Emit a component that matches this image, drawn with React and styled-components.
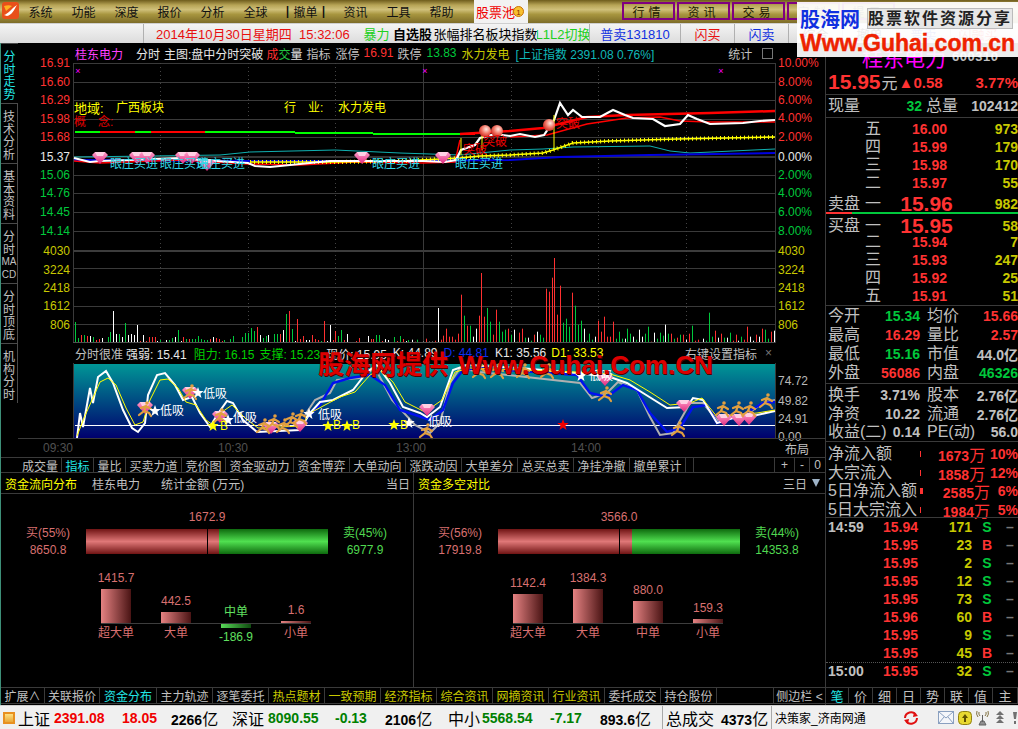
import React from "react";
import styled, { createGlobalStyle } from "styled-components";

const FONT = `"Liberation Sans", "Noto Sans CJK SC", sans-serif`;
const RED = "#ff3232";
const GREEN = "#00c83c";
const YELLOW = "#c8c800";
const GRAY = "#c0c0c0";
const LINE = "#3a3a3a";

const GlobalStyle = createGlobalStyle`
  html, body { margin: 0; padding: 0; background: #000; overflow: hidden; }
  body { font-family: ${FONT}; font-size: 12px; }
`;

const Page = styled.div`
  position: relative;
  width: 1018px;
  height: 729px;
  display: flex;
  flex-direction: column;
  background: #000;
  overflow: hidden;
`;

/* ---------- top menu ---------- */
const MenuBar = styled.div`
  height: 23px;
  flex: none;
  display: flex;
  align-items: stretch;
  background: linear-gradient(180deg, #6e5c1c 0, #b7a456 22%, #d0c07a 42%, #a8963f 62%, #7d6c28 100%);
  border-bottom: 1px solid #cfcfcf;
  overflow: hidden;
`;
const Logo = styled.svg`
  width: 17px;
  height: 17px;
  margin: 2px 0 0 2px;
  flex: none;
`;
const MenuItem = styled.div`
  width: ${(p) => p.$w || 43}px;
  flex: none;
  display: flex;
  align-items: center;
  justify-content: center;
  color: #111;
  font-size: 12px;
`;
const PoolTab = styled.div`
  width: 54px;
  margin-left: 11px;
  flex: none;
  display: flex;
  align-items: center;
  background: #f2f2f2;
  color: #f00000;
  font-size: 13px;
  padding-left: 2px;
  box-sizing: border-box;
  white-space: nowrap;
  overflow: hidden;
`;
const BadgeIcon = styled.svg`
  width: 11px;
  height: 11px;
  flex: none;
  margin-left: -2px;
`;
const MenuButtons = styled.div`
  margin-left: 94px;
  display: flex;
  gap: 2px;
  padding-top: 2px;
`;
const MenuButton = styled.div`
  width: 53px;
  height: 18px;
  box-sizing: border-box;
  flex: none;
  display: flex;
  align-items: center;
  justify-content: center;
  border: 2px solid #800080;
  color: #1a1a00;
  font-size: 12px;
  letter-spacing: 4px;
`;

/* ---------- toolbar ---------- */
const ToolBar = styled.div`
  height: 19px;
  flex: none;
  display: flex;
  align-items: center;
  padding-left: 2px;
  background: linear-gradient(180deg, #f4f4f4, #dcdcdc);
  font-size: 13px;
  white-space: nowrap;
`;
const ToolCell = styled.div`
  width: ${(p) => p.$w}px;
  height: 100%;
  flex: none;
  display: flex;
  align-items: center;
  justify-content: ${(p) => p.$align || "center"};
  padding-left: ${(p) => p.$pad || 0}px;
  box-sizing: border-box;
  color: ${(p) => p.$color || "#000"};
  font-weight: ${(p) => (p.$bold ? 700 : 400)};
  border-right: ${(p) => (p.$edge ? "1px solid #b0b0b0" : "none")};
  overflow: hidden;
`;

/* ---------- main ---------- */
const Main = styled.div`
  position: relative;
  flex: 1;
  display: flex;
  min-height: 0;
  border-left: 1px solid #3d8f78;
  box-sizing: border-box;
`;
const LeftColumn = styled.div`
  width: 824px;
  flex: none;
  display: flex;
  flex-direction: column;
`;
const ChartArea = styled.div`
  height: 414px;
  flex: none;
  display: flex;
`;
const SideTabs = styled.div`
  width: 17px;
  flex: none;
  display: flex;
  flex-direction: column;
`;
const SideTab = styled.div`
  height: 60px;
  box-sizing: border-box;
  padding-top: 7px;
  display: flex;
  flex-direction: column;
  align-items: center;
  border-top: 1px solid #4a4a4a;
  border-right: ${(p) => (p.$active ? "none" : "1px solid #4a4a4a")};
  color: ${(p) => (p.$active ? "#22e6e6" : GRAY)};
`;
const SideChar = styled.span`
  font-size: ${(p) => (p.$latin ? 10 : 12)}px;
  line-height: 12.5px;
`;
const ChartColumn = styled.div`
  width: 807px;
  flex: none;
  display: flex;
  flex-direction: column;
`;
const ChartHead = styled.div`
  height: 20px;
  flex: none;
  display: flex;
  align-items: center;
  padding-left: 57px;
  font-size: 12px;
  white-space: nowrap;
  color: ${GRAY};
`;
const HeadText = styled.span`
  margin-left: ${(p) => p.$gap || 0}px;
  color: ${(p) => p.$color || "inherit"};
  flex: none;
`;
const WindowIcon = styled.span`
  width: 9px;
  height: 9px;
  flex: none;
  margin-left: 10px;
  border: 1px solid #777;
`;
const Drawing = styled.svg`
  display: block;
  flex: none;
  overflow: visible;
`;
const ChartText = styled.text`
  font-family: ${FONT};
  font-size: ${(p) => p.$size || 12}px;
  fill: ${(p) => p.$color || GRAY};
  dominant-baseline: central;
  text-anchor: ${(p) => p.$anchor || "start"};
`;
const IndicatorHead = styled(ChartHead)`
  padding-right: 53px;
`;
const TimeAxis = styled.div`
  height: 19px;
  flex: none;
  display: flex;
  align-items: center;
  padding-left: 25px;
  box-sizing: border-box;
  border-top: 1px solid ${LINE};
  color: #505050;
  font-size: 12px;
`;
const TimeLabel = styled.span`
  width: 30px;
  flex: none;
  margin-right: ${(p) => p.$gap}px;
`;
const LayoutLabel = styled.span`
  margin-left: 184px;
  color: ${GRAY};
  font-size: 12px;
`;

/* tab strips */
const TabStrip = styled.div`
  height: ${(p) => p.$h || 16}px;
  flex: none;
  display: flex;
  align-items: stretch;
  border-top: 1px solid ${LINE};
  border-bottom: 1px solid ${LINE};
  box-sizing: border-box;
  white-space: nowrap;
`;
const TabGutter = styled.div`
  width: 18px;
  flex: none;
`;
const Tab = styled.div`
  width: ${(p) => p.$w}px;
  flex: none;
  box-sizing: border-box;
  display: flex;
  align-items: center;
  justify-content: center;
  border-right: ${(p) => (p.$plain ? "none" : `1px solid ${LINE}`)};
  border-left: ${(p) => (p.$lead ? `1px solid ${LINE}` : "none")};
  color: ${(p) => p.$color || GRAY};
  font-size: ${(p) => p.$size || 12}px;
`;

/* money flow panels */
const PanelHeads = styled.div`
  height: 21px;
  flex: none;
  display: flex;
  box-sizing: border-box;
  border-bottom: 1px solid ${LINE};
`;
const PanelHead = styled.div`
  width: ${(p) => p.$w}px;
  flex: none;
  box-sizing: border-box;
  display: flex;
  align-items: center;
  padding: 0 ${(p) => p.$right || 3}px 0 4px;
  color: ${GRAY};
  font-size: 12px;
  white-space: nowrap;
  border-right: ${(p) => (p.$edge ? `1px solid ${LINE}` : "none")};
`;
const Fill = styled.span`
  flex: 1;
`;
const Caret = styled.span`
  margin-left: 5px;
  width: 0;
  height: 0;
  border-left: 4px solid transparent;
  border-right: 4px solid transparent;
  border-top: 8px solid #9fb4c8;
`;
const FundRow = styled.div`
  height: 193px;
  flex: none;
  display: flex;
`;
const FundPanel = styled.div`
  width: ${(p) => p.$w}px;
  flex: none;
  box-sizing: border-box;
  padding: 16px 0 0 ${(p) => p.$left}px;
  border-right: ${(p) => (p.$edge ? `1px solid ${LINE}` : "none")};
`;
const Summary = styled.div`
  display: grid;
  grid-template-columns: 76px 242px 74px;
  grid-template-rows: 14px 25px;
  row-gap: 5px;
  align-items: center;
  font-size: 12px;
  line-height: 17px;
  text-align: center;
`;
const Diff = styled.div`
  grid-column: 2;
  color: #d87070;
`;
const SideLabel = styled.div`
  grid-row: 2;
  color: ${(p) => p.$color};
`;
const MoneyBar = styled.div`
  grid-row: 2;
  grid-column: 2;
  height: 25px;
  display: flex;
`;
const MoneyPart = styled.div`
  position: relative;
  flex: ${(p) => (p.$grow ? 1 : "none")};
  background: linear-gradient(180deg, ${(p) => p.$edge} 0, ${(p) => p.$mid} 50%, ${(p) => p.$edge} 100%);
`;
const MoneyTick = styled.span`
  position: absolute;
  top: 0;
  bottom: 0;
  width: 1px;
  background: #000;
`;
const OrderGrid = styled.div`
  margin: 0 0 0 ${(p) => p.$left}px;
  width: 210px;
  display: grid;
  grid-template-columns: repeat(4, 30px);
  grid-template-rows: 69px 1px auto;
  column-gap: 30px;
  justify-content: start;
  font-size: 12px;
  line-height: 16px;
`;
const UpperCell = styled.div`
  display: flex;
  flex-direction: column;
  align-items: center;
  justify-content: flex-end;
  white-space: nowrap;
  color: ${(p) => p.$color || "#d87070"};
`;
const OrderBar = styled.div`
  width: 30px;
  margin-top: 3px;
  background: linear-gradient(90deg, #e58282, #4a1414);
`;
const BaseLine = styled.div`
  grid-column: 1 / -1;
  background: #3d3d3d;
`;
const LowerCell = styled.div`
  display: flex;
  flex-direction: column;
  align-items: center;
  white-space: nowrap;
  padding-top: ${(p) => (p.$neg ? 0 : 1)}px;
  color: ${(p) => p.$color || "#d87070"};
`;
const NegBar = styled.div`
  width: 30px;
  height: 4px;
  margin-bottom: 1px;
  background: linear-gradient(90deg, #58d858, #0e4a0e);
`;

/* ---------- right panel ---------- */
const RightPanel = styled.div`
  width: 193px;
  flex: none;
  box-sizing: border-box;
  border-left: 1px solid ${LINE};
  display: flex;
  flex-direction: column;
  overflow: hidden;
  white-space: nowrap;
`;
const NameRow = styled.div`
  height: 27px;
  flex: none;
  display: flex;
  align-items: center;
  padding-left: 36px;
`;
const StockName = styled.span`
  color: #ff00ff;
  font-size: 21px;
`;
const StockCode = styled.span`
  color: ${GRAY};
  font-size: 13px;
  font-weight: 700;
  margin-left: 6px;
  letter-spacing: 0.5px;
`;
const PriceRow = styled.div`
  height: 25px;
  flex: none;
  box-sizing: border-box;
  display: flex;
  align-items: center;
  padding: 0 0 0 2px;
  border-bottom: 1px solid ${LINE};
  color: ${RED};
  font-weight: 700;
  font-size: 15px;
`;
const BigPrice = styled.span`
  font-size: 21px;
`;
const Unit = styled.span`
  color: ${GRAY};
  font-size: 16px;
  font-weight: 400;
  margin: 0 1px 0 1px;
`;
const Row = styled.div`
  height: ${(p) => p.$h || 18}px;
  flex: none;
  box-sizing: border-box;
  display: grid;
  grid-template-columns: ${(p) => p.$cols};
  align-items: center;
  padding-left: 2px;
  border-bottom: ${(p) => (p.$rule ? `1px solid ${LINE}` : "none")};
`;
const Label = styled.span`
  color: ${GRAY};
  font-size: 16px;
  line-height: 16px;
  margin-left: ${(p) => p.$pad || 0}px;
  text-align: ${(p) => p.$align || "left"};
`;
const Value = styled.span`
  color: ${(p) => p.$color || GRAY};
  font-size: ${(p) => p.$size || 14}px;
  font-weight: 700;
  text-align: ${(p) => p.$align || "right"};
`;
const Pressure = styled.div`
  height: 2px;
  flex: none;
  display: flex;
  background: ${GREEN};
`;
const PressureRed = styled.div`
  width: 26px;
  background: ${RED};
`;
const Rule = styled.div`
  height: 1px;
  flex: none;
  background: ${LINE};
`;
const Spacer = styled.div`
  height: ${(p) => p.$h}px;
  flex: none;
`;
const Tick = styled.span`
  width: ${(p) => p.$w}px;
  height: 6px;
  background: ${RED};
  justify-self: start;
`;
const DottedRule = styled.div`
  height: 0;
  flex: none;
  border-top: 1px dotted #555;
  margin-bottom: -1px;
`;
const BigCn = styled.span`
  font-size: 16px;
  font-weight: 400;
`;

/* ---------- status bar ---------- */
const StatusBar = styled.div`
  height: 24px;
  flex: none;
  display: flex;
  align-items: center;
  background: #f0f0f0;
  border-top: 1px solid #cfcfcf;
  box-sizing: border-box;
  white-space: nowrap;
  overflow: hidden;
`;
const OrangeSquare = styled.span`
  width: 12px;
  height: 12px;
  margin: 0 3px;
  flex: none;
  box-sizing: border-box;
  border: 2px solid #e89020;
  background: linear-gradient(180deg, #ffe080, #e8a838);
`;
const StatusCell = styled.span`
  width: ${(p) => p.$w}px;
  flex: none;
  color: ${(p) => p.$color || "#000"};
  font-size: ${(p) => (p.$small ? 12 : p.$cn ? 16 : 14)}px;
  font-weight: ${(p) => (p.$cn ? 400 : 700)};
`;
const StatusRule = styled.span`
  width: 1px;
  height: 100%;
  background: #a8a8a8;
  flex: none;
  margin-right: 3px;
`;
const StatusIcon = styled.svg`
  flex: none;
  margin-left: ${(p) => p.$gap}px;
`;

/* ---------- overlays ---------- */
const AdBox = styled.div`
  position: absolute;
  left: 797px;
  top: 2px;
  width: 221px;
  height: 55px;
  box-sizing: border-box;
  padding: 3px 0 0 3px;
  background: rgba(255, 255, 255, 0.93);
  white-space: nowrap;
`;
const AdTop = styled.div`
  display: flex;
  align-items: center;
  height: 26px;
`;
const AdName = styled.span`
  color: #1030e0;
  font-size: 20px;
  font-weight: 700;
`;
const AdSlogan = styled.span`
  margin-left: 7px;
  width: 146px;
  background: #e6e6e6;
  border: 1px solid #bbb;
  box-sizing: border-box;
  text-align: center;
  color: #222;
  font-size: 16px;
  font-weight: 700;
  letter-spacing: 2px;
  line-height: 19px;
`;
const AdUrl = styled.div`
  color: #ee2200;
  font-size: 23px;
  font-weight: 700;
  line-height: 24px;
  -webkit-text-stroke: 0.4px #ee2200;
`;
const Banner = styled.div`
  position: absolute;
  left: 317px;
  top: 308px;
  color: #dd0000;
  font-size: 26px;
  font-weight: 700;
  line-height: 28px;
  white-space: nowrap;
  text-shadow: 1px 1px 0 #500000;
`;
const BannerUrl = styled.span`
  margin-left: 10px;
`;

/* ---------- chart data ---------- */
const line = (pts) => pts.map((p) => p.join(",")).join(" ");

const WHITE_LINE = [[74,158],[90,162],[100,161],[130,160],[180,158],[200,160],[248,163],[255,166],[270,167],[290,165],[310,163],[330,161],[355,161],[400,161],[423,161],[445,162],[456,160],[461,150],[475,145],[480,138],[495,134],[510,136],[520,134],[535,137],[544,135],[554,120],[560,103],[568,115],[573,110],[582,117],[600,117],[613,110],[625,115],[633,118],[653,119],[665,126],[680,124],[688,115],[697,119],[710,124],[743,123],[760,121],[775,120]];
const RED_TOP = [[460,134],[510,131],[543,128],[587,117],[627,115],[710,113],[775,111]];
const RED_LOW = [[510,137],[547,135],[587,124],[627,118],[660,117],[680,121],[710,122],[775,122]];
const RED_LEFT = [[74,161],[100,163],[180,160],[248,164],[300,165],[355,162],[423,163],[455,162],[460,140]];
const YELLOW_LINE = [[250,162],[335,162],[400,161],[460,158],[480,156],[510,155],[543,153],[553,150],[573,143],[610,141],[677,139],[775,137]];
const CYAN_LINE = [[74,157],[150,156],[220,155],[250,152],[335,150],[400,153],[460,155],[510,150],[543,149],[573,147],[650,146],[670,151],[690,153],[775,149]];
const BLUE_LINE = [[74,160],[250,161],[400,161],[510,160],[543,158],[560,157],[650,155],[775,153]];
const TREND = [[75,100,132,"#00ff00"],[100,135,132,"#ff0000"],[135,151,132,"#00ff00"],[151,205,132,"#ff0000"],[205,295,132,"#00ff00"],[295,373,133,"#00ff00"],[373,460,134,"#00ff00"],[460,475,134,"#ff0000"]];

const PRICE_AXIS = [["16.91",63,RED],["16.60",82,RED],["16.29",100,RED],["15.98",119,RED],["15.68",137,RED],["15.37",157,"#e8e8e8"],["15.06",175,GREEN],["14.76",193,GREEN],["14.45",212,GREEN],["14.14",231,GREEN],["4030",251,YELLOW],["3224",270,YELLOW],["2418",288,YELLOW],["1612",306,YELLOW],["806",325,YELLOW]];
const PERCENT_AXIS = [["10.00%",63,RED],["8.00%",82,RED],["6.00%",100,RED],["4.00%",118,RED],["2.00%",137,RED],["0.00%",157,"#e8e8e8"],["2.00%",175,GREEN],["4.00%",193,GREEN],["6.00%",212,GREEN],["8.00%",231,GREEN],["4030",251,YELLOW],["3224",270,YELLOW],["2418",288,YELLOW],["1612",306,YELLOW],["806",325,YELLOW]];
const GRID_Y = [63,82,100,119,137,175,193,212,231,268,287,306,324];

// x in 1/3 px, colour, height in px
const VOL_LEFT = "225g21 235g5 244r8 253g8 262r7 271w7 280g6 289r3 298r4 307w5 316w1 325g6 331g11 340w32 349w9 358g9 367w6 376g20 385w8 394w9 403w8 412w18 421r2 430w8 439r2 448r6 457r6 466r6 472w2 481g3 499w3 508g3 517g5 526w6 535g13 544w2 550r6 559g4 568r4 577g4 586g4 595g7 604g4 613g3 622g3 631r4 640w6 649r5 658r4 667r2 673g3 691g4 700g7 709w1 727g6 736g10 745g10 754g15 763g12 772r16 781w8 790g5 799g7 805w8 814w1 823g9 832g9 841r9 850w13 859g29 868r32 877g14 886w2 892r24 901r4 910r7 919w3 928w3 937r8 946r4 955r3 964g2 973r22 982w2 991w18 1000r3 1006r12 1015g7 1024g13 1033r3 1042w9 1051w1 1060w1 1069r2 1078r5 1087r1 1096g1 1105w7 1114r4 1120r4 1129g8 1138g8 1147r2 1156w4 1165w3 1174r1 1183g6 1192r2 1201g7 1210r4 1219w2 1225g3";
// x in 1/3 px past 410, colour, top in 1/3 px past 250
const VOL_RIGHT = "5w270 14r276 22g270 40w276 49r267 58w276 67w276 76r273 85w175 94r270 100r258 109r237 118r261 127r261 136r270 145r252 154r135 163g198 172r228 181g228 190w261 199w237 206r198 214r70 223r201 232g175 241g216 250r255 259r180 268g216 277g246 286g240 295r237 304g255 313w240 320g276 328r249 337r237 346g264 355w264 364g273 373r255 382w246 391g255 400g264 409r117 418r126 427r84 433r25 442r195 451r108 460g219 469g207 478g231 487r129 496g168 505g225 514g213 523w237 532g273 538g252 547g270 556w261 565r213 574r246 583r201 592r261 601r261 610r216 619g267 628g246 637g267 646w267 652g237 661g252 670w261 679g270 688w240 697w261 706g252 715g231 724r276 733w249 742g267 751g249 760g258 766w225 775g252 784r252 793g267 802r264 811g255 820r255 829w270 838r252 847g228 856r273 865r270 880w267 889g273 898g189 907g261 916r243 925w264 934r252 943g264 952w264 961g249 970r273 979r255 985w273 994g261 1003r270 1012r231 1021w261 1030w273 1039r255 1048w261 1057r237 1066g240 1075g267 1084r246 1093w243";
const VOL_COLORS = { r: "#ff3030", g: "#00c83c", w: "#ffffff" };

const volumeBars = [
  ...VOL_LEFT.split(" ").map((s) => {
    const [, x, c, h] = s.match(/(\d+)([rgw])(\d+)/);
    return { x: +x / 3, c, h: +h };
  }),
  ...VOL_RIGHT.split(" ").map((s) => {
    const [, x, c, t] = s.match(/(\d+)([rgw])(\d+)/);
    return { x: 410 + +x / 3, c, h: (280 - +t) / 3 };
  }),
];

const IND_WHITE = [[77,438],[80,413],[83,427],[90,388],[93,403],[98,377],[106,371],[113,383],[123,410],[132,428],[138,432],[145,423],[148,395],[157,375],[165,373],[175,385],[183,400],[192,397],[200,413],[210,427],[217,415],[227,401],[233,403],[243,420],[257,432],[300,430],[310,413],[320,402],[333,400],[353,390],[367,372],[377,365],[390,383],[403,407],[420,413],[427,417],[440,407],[453,370],[467,365],[520,368],[577,373],[610,377],[627,383],[643,393],[667,408],[687,407],[693,398],[703,400],[717,423],[733,418],[757,415],[775,411]];
const IND_YELLOW = [[77,436],[84,418],[92,400],[100,382],[108,378],[116,385],[126,408],[135,425],[143,422],[150,400],[160,380],[168,379],[178,388],[186,402],[196,405],[206,420],[213,425],[222,412],[232,405],[245,418],[258,428],[300,426],[312,412],[325,405],[340,397],[355,392],[370,375],[380,370],[393,382],[405,402],[425,412],[442,400],[455,372],[470,368],[520,370],[575,372],[610,374],[630,380],[650,392],[670,405],[690,403],[702,398],[718,418],[735,415],[757,413],[775,410]];
const IND_BLUE = [[307,418],[320,405],[333,383],[350,378],[370,375],[385,385],[400,410],[430,420],[443,410],[453,383],[463,370],[477,368],[577,375],[590,393],[607,397],[623,385],[637,390],[650,413],[667,432],[680,428],[693,407],[707,405],[717,423],[743,415],[763,403],[775,402]];
const IND_GRAY = [[305,415],[315,400],[330,393],[337,380],[360,378],[375,368],[392,400],[415,425],[430,433],[440,423],[450,383],[460,368],[480,372],[580,383],[592,398],[607,393],[618,382],[637,390],[650,417],[660,435],[673,433],[690,403],[703,403],[717,420],[743,417],[763,403],[775,400]];

const starPts = (cx, cy, r) => {
  const out = [];
  for (let i = 0; i < 10; i++) {
    const a = -Math.PI / 2 + (i * Math.PI) / 5;
    const rad = i % 2 ? r * 0.42 : r;
    out.push(`${(cx + rad * Math.cos(a)).toFixed(1)},${(cy + rad * Math.sin(a)).toFixed(1)}`);
  }
  return out.join(" ");
};

function Gem({ x, y }) {
  return (
    <g transform={`translate(${x} ${y})`}>
      <polygon points="-8,-3 -5,-6 5,-6 8,-3 0,6" fill="url(#gemFill)" />
      <polygon points="-5,-6 5,-6 3,-2 -3,-2" fill="#ffd0e4" />
    </g>
  );
}

function Runner({ x, y }) {
  return (
    <g transform={`translate(${x} ${y})`} stroke="#e2a040" strokeWidth="2.2" fill="none" strokeLinecap="round">
      <circle cx="2" cy="-7" r="1.8" fill="#e2a040" stroke="none" />
      <path d="M1 -4 L-1 1 L-6 5 M-1 1 L4 3 L6 6 M1 -4 L6 -1 M1 -4 L-4 -2" />
    </g>
  );
}

function Ball({ x, y }) {
  return <circle cx={x} cy={y} r="6" fill="url(#ballFill)" />;
}

function PriceChart() {
  return (
    <Drawing width="807" height="280" viewBox="18 63 807 280">
      <defs>
        <linearGradient id="gemFill" x1="0" y1="0" x2="0" y2="1">
          <stop offset="0" stopColor="#ff9cc8" />
          <stop offset="1" stopColor="#e02a80" />
        </linearGradient>
        <radialGradient id="ballFill" cx="0.6" cy="0.35" r="0.75">
          <stop offset="0" stopColor="#ffe8e0" />
          <stop offset="0.5" stopColor="#f07060" />
          <stop offset="1" stopColor="#c01810" />
        </radialGradient>
      </defs>
      {GRID_Y.map((y) => (
        <line key={y} x1="73" x2="775" y1={y + 0.5} y2={y + 0.5} stroke={LINE} />
      ))}
      <line x1="73" x2="775" y1="157" y2="157" stroke="#333" strokeWidth="2" />
      <line x1="73" x2="775" y1="251" y2="251" stroke="#3c3c3c" strokeWidth="2" />
      {[160, 248, 335, 511, 598, 686].map((x) => (
        <line key={x} x1={x + 0.5} x2={x + 0.5} y1="63" y2="343" stroke="#444" strokeDasharray="1 3" />
      ))}
      {[73, 423, 775].map((x) => (
        <line key={x} x1={x + 0.5} x2={x + 0.5} y1="63" y2="343" stroke={LINE} />
      ))}
      {PRICE_AXIS.map(([t, y, c]) => (
        <ChartText key={t} x="70" y={y} $anchor="end" $color={c}>{t}</ChartText>
      ))}
      {PERCENT_AXIS.map(([t, y, c], i) => (
        <ChartText key={i} x="778" y={y} $color={c}>{t}</ChartText>
      ))}

      {[78, 425, 721].map((x) => (
        <ChartText key={x} x={x} y="71" $size={9} $anchor="middle" $color="#ff00ff">×</ChartText>
      ))}
      <ChartText x="74" y="108" $size={13} $color="#ffff00">地域:</ChartText>
      <ChartText x="116" y="108" $size={12} $color="#ffff00">广西板块</ChartText>
      <ChartText x="284" y="108" $size={12} $color="#ffff00">行</ChartText>
      <ChartText x="308" y="108" $size={12} $color="#ffff00">业:</ChartText>
      <ChartText x="338" y="108" $size={12} $color="#ffff00">水力发电</ChartText>
      <ChartText x="74" y="122" $size={12} $color="#e00000">概</ChartText>
      <ChartText x="98" y="122" $size={12} $color="#e00000">念:</ChartText>

      {TREND.map(([a, b, y, c]) => (
        <line key={a} x1={a} x2={b} y1={y} y2={y} stroke={c} strokeWidth="2" />
      ))}
      <polyline points={line(CYAN_LINE)} fill="none" stroke="#10b0b0" />
      <polyline points={line(BLUE_LINE)} fill="none" stroke="#0000e0" strokeWidth="2" />
      <polyline points={line(RED_LEFT)} fill="none" stroke="#ff0000" strokeWidth="1.5" />
      <polyline points={line(YELLOW_LINE)} fill="none" stroke="#ffff00" strokeWidth="1.5" />
      <polyline points={line(YELLOW_LINE)} fill="none" stroke="#ffff00" strokeWidth="4" strokeDasharray="1 3" />
      <polyline points={line(RED_LOW)} fill="none" stroke="#ff0000" strokeWidth="1.5" />
      <polyline points={line(RED_TOP)} fill="none" stroke="#ff0000" strokeWidth="2.5" />
      <polyline points={line(WHITE_LINE)} fill="none" stroke="#ffffff" strokeWidth="2.2" />
      {[[461,138,155],[482,130,150],[554,115,150]].map(([x, a, b]) => (
        <line key={x} x1={x} x2={x} y1={a} y2={b} stroke="#ffff00" />
      ))}

      {[100,137,147,183,192,207,362,443].map((x, i) => (
        <Gem key={x} x={x} y={i === 5 ? 165 : 158} />
      ))}
      {[110,160,197,372,455].map((x) => (
        <ChartText key={x} x={x} y="164" $size={12} $color="#30d8e8">眼庄买进</ChartText>
      ))}
      <Ball x={485} y={131} />
      <Ball x={497} y={131} />
      <Ball x={549} y={125} />
      <ChartText x="463" y="150" $color="#f00000">突破</ChartText>
      <ChartText x="483" y="142" $color="#f00000">突破</ChartText>
      <ChartText x="556" y="124" $color="#f00000">突破</ChartText>

      {volumeBars.map((b, i) => (
        <rect key={i} x={Math.round(b.x)} y={343 - b.h} width="1" height={b.h} fill={VOL_COLORS[b.c]} />
      ))}
      <line x1="73" x2="775" y1="342.5" y2="342.5" stroke="#505050" />
    </Drawing>
  );
}

function IndicatorChart() {
  return (
    <Drawing width="807" height="75" viewBox="18 363 807 75">
      <defs>
        <linearGradient id="indFill" x1="0" y1="0" x2="0" y2="1">
          <stop offset="0" stopColor="#009696" />
          <stop offset="1" stopColor="#00006e" />
        </linearGradient>
      </defs>
      <rect x="74" y="364" width="701" height="74" fill="url(#indFill)" />
      <line x1="73.5" x2="73.5" y1="363" y2="438" stroke={LINE} />
      <line x1="775.5" x2="775.5" y1="363" y2="438" stroke={LINE} />
      <line x1="75" x2="775" y1="425.5" y2="425.5" stroke="#fff" />
      <polyline points={line(IND_GRAY)} fill="none" stroke="#b0b0b0" strokeWidth="2" />
      <polyline points={line(IND_BLUE)} fill="none" stroke="#0010f0" strokeWidth="2.4" />
      <polyline points={line(IND_WHITE)} fill="none" stroke="#fff" strokeWidth="2" />
      <polyline points={line(IND_YELLOW)} fill="none" stroke="#ffff00" />

      {[[145,408],[190,393],[220,417],[427,410],[605,380],[684,406],[724,420],[739,420],[749,419],[271,428],[300,426]].map(([x, y]) => (
        <Gem key={x} x={x} y={y} />
      ))}
      {[[145,410],[190,393],[220,417],[263,427],[273,423],[283,427],[291,421],[300,418],[426,432],[479,372],[497,372],[523,372],[547,372],[605,395],[678,430],[722,410],[737,410],[749,410],[766,402]].map(([x, y]) => (
        <Runner key={x} x={x} y={y} />
      ))}
      {[[155,411],[198,393],[228,420],[309,414],[409,423],[581,376]].map(([x, y]) => (
        <polygon key={x} points={starPts(x, y, 6)} fill="#fff" />
      ))}
      {[[213,426],[328,426],[347,426],[394,425]].map(([x, y]) => (
        <polygon key={x} points={starPts(x, y, 6)} fill="#ffff00" />
      ))}
      <polygon points={starPts(563, 425, 6)} fill="#f00000" />
      {[[160,411],[203,394],[233,418],[318,415],[428,422],[589,376]].map(([x, y]) => (
        <ChartText key={x} x={x} y={y} $color="#fff">低吸</ChartText>
      ))}
      {[[220,426],[333,425],[352,425],[400,425]].map(([x, y]) => (
        <ChartText key={x} x={x} y={y} $color="#ffff00">B</ChartText>
      ))}
      {[["74.72",381],["49.82",401],["24.91",419],["0.00",437]].map(([t, y]) => (
        <ChartText key={t} x="778" y={y} $color="#b8b8b8">{t}</ChartText>
      ))}
    </Drawing>
  );
}

/* ---------- tab data ---------- */
const SIDE_TABS = [
  ["分","时","走","势"],["技","术","分","析"],["基","本","资","料"],["分","时","MA","CD"],["分","时","顶","底"],["机","构","分","时"],
];
const SERIES_TABS = [
  ["成交量",43],["指标",32,"#22e6e6"],["量比",32],["买卖力道",56],["竞价图",44],["资金驱动力",68],["资金博弈",56],["大单动向",56],["涨跌动因",56],["大单差分",56],["总买总卖",56],["净挂净撤",56],["撤单累计",56],["",8],
];
const BOTTOM_TABS = [
  ["扩展∧",44],["关联报价",55],["资金分布",57,"#22e6e6"],["主力轨迹",56],["逐笔委托",56],["热点题材",56,YELLOW],["一致预期",56,YELLOW],["经济指标",56,YELLOW],["综合资讯",56,YELLOW],["网摘资讯",56,YELLOW],["行业资讯",56,YELLOW],["委托成交",56],["持仓股份",56],
];
const QUOTE_TABS = [["笔",23,"#22e6e6"],["价",24],["细",24],["日",24],["势",24],["联",24],["值",24],["主",25]];

const FLOW_A = {
  buy: "买(55%)", buyVal: "8650.8", sell: "卖(45%)", sellVal: "6977.9", diff: "1672.9",
  redW: 133, tick: 121,
  items: [["1415.7","超大单",34],["442.5","大单",11],["中单","-186.9",0],["1.6","小单",2]],
};
const FLOW_B = {
  buy: "买(56%)", buyVal: "17919.8", sell: "卖(44%)", sellVal: "14353.8", diff: "3566.0",
  redW: 134, tick: 121,
  items: [["1142.4","超大单",29],["1384.3","大单",34],["880.0","中单",22],["159.3","小单",4]],
};

function FlowChart({ data, w, left, barLeft, edge }) {
  return (
    <FundPanel $w={w} $left={left} $edge={edge}>
      <Summary>
        <Diff>{data.diff}</Diff>
        <SideLabel $color="#d87070">{data.buy}<br />{data.buyVal}</SideLabel>
        <MoneyBar>
          <MoneyPart $edge="#701414" $mid="#e07878" style={{ width: data.redW }}>
            <MoneyTick style={{ left: data.tick }} />
          </MoneyPart>
          <MoneyPart $edge="#0e6a0e" $mid="#50e050" $grow />
        </MoneyBar>
        <SideLabel $color="#50d850">{data.sell}<br />{data.sellVal}</SideLabel>
      </Summary>
      <OrderGrid $left={barLeft}>
        {data.items.map(([top, , h]) => (
          <UpperCell key={top} $color={h === 0 ? "#60e060" : undefined}>
            <span>{top}</span>
            {h > 0 ? <OrderBar style={{ height: h }} /> : <Spacer $h={3} />}
          </UpperCell>
        ))}
        <BaseLine />
        {data.items.map(([, bottom, h]) => (
          <LowerCell key={bottom} $neg={h === 0} $color={h === 0 ? "#60e060" : undefined}>
            {h === 0 && <NegBar />}
            {bottom}
          </LowerCell>
        ))}
      </OrderGrid>
    </FundPanel>
  );
}

/* ---------- right panel data ---------- */
const ASK = [["五","16.00","973"],["四","15.99","179"],["三","15.98","170"],["二","15.97","55"]];
const BID = [["二","15.94","7"],["三","15.93","247"],["四","15.92","25"],["五","15.91","51"]];
const ORDER_COLS = "32px 26px 61px 1fr";
const BIG_ORDER_COLS = "32px 26px 81px 1fr";
const STAT_COLS = "32px 60px 7px 32px 1fr";
const TICK_COLS = "55px 50px 39px 30px 1fr";

const STATS_A = [
  ["今开","15.34",GREEN,"均价","15.66",RED],
  ["最高","16.29",RED,"量比","2.57",RED],
  ["最低","15.16",GREEN,"市值","44.0亿",GRAY],
  ["外盘","56086",RED,"内盘","46326",GREEN],
];
const STATS_B = [
  ["换手","3.71%",GRAY,"股本","2.76亿",GRAY],
  ["净资","10.22",GRAY,"流通","2.76亿",GRAY],
  ["收益(二)","0.14",GRAY,"PE(动)","56.0",GRAY],
];
const FLOWS = [
  ["净流入额",1,"1673","10%","92px 18px 47px 1fr"],
  ["大宗流入",1,"1858","12%","92px 18px 47px 1fr"],
  ["5日净流入额",3,"2585","6%","92px 18px 52px 1fr"],
  ["5日大宗流入",1,"1984","5%","92px 18px 52px 1fr"],
];
const TICKS = [
  ["14:59","15.94","171","S"],["","15.95","23","B"],["","15.95","2","S"],["","15.95","12","S"],["","15.95","73","S"],
  ["","15.96","60","B"],["","15.95","9","S"],["","15.95","45","B"],
];

function OrderRow({ label, level, price, qty, big, h }) {
  return (
    <Row $cols={big ? BIG_ORDER_COLS : ORDER_COLS} $h={h}>
      <Label>{label}</Label>
      <Label $align="center">{level}</Label>
      <Value $color={RED} $size={big ? 21 : 14} $align={big ? "center" : "right"}>{price}</Value>
      <Value $color={YELLOW}>{qty}</Value>
    </Row>
  );
}

function StatRow({ row, h }) {
  const [a, av, ac, b, bv, bc] = row;
  return (
    <Row $cols={STAT_COLS} $h={h}>
      <Label>{a}</Label>
      <Value $color={ac}>{av}</Value>
      <span />
      <Label>{b}</Label>
      <Value $color={bc}>{bv}</Value>
    </Row>
  );
}

function TickRow({ t }) {
  const [time, price, vol, side] = t;
  return (
    <Row $cols={TICK_COLS} $h={18}>
      <Value $align="left" $color={GRAY}>{time}</Value>
      <Value $align="left" $color={RED}>{price}</Value>
      <Value $color={YELLOW}>{vol}</Value>
      <Value $align="center" $color={side === "S" ? GREEN : RED}>{side}</Value>
      <Value $align="center" $color="#777">–</Value>
    </Row>
  );
}

export default function App() {
  return (
    <Page>
      <GlobalStyle />
      <MenuBar>
        <Logo viewBox="0 0 17 17">
          <rect width="17" height="17" rx="3" fill="#e8501a" />
          <path d="M2 13 C6 12 9 7 15 3 C12 8 10 13 5 14 Z" fill="#fff" />
          <path d="M2 4 C5 3 8 3 10 4 L4 9 Z" fill="#ffb020" />
        </Logo>
        {["系统","功能","深度","报价","分析","全球"].map((m) => <MenuItem key={m}>{m}</MenuItem>)}
        <MenuItem $w={57}>┃撤单┃</MenuItem>
        {["资讯","工具","帮助"].map((m) => <MenuItem key={m}>{m}</MenuItem>)}
        <PoolTab>
          股票池
          <BadgeIcon viewBox="0 0 11 11">
            <circle cx="5.5" cy="5.5" r="5" fill="#f8c030" stroke="#c87000" />
            <text x="5.5" y="8.5" fontSize="8" textAnchor="middle" fill="#803000" fontFamily="Liberation Sans">1</text>
          </BadgeIcon>
        </PoolTab>
        <MenuButtons>
          {["行情","资讯","交易","定制","提示"].map((b) => <MenuButton key={b}>{b}</MenuButton>)}
        </MenuButtons>
      </MenuBar>

      <ToolBar>
        <ToolCell $w={142} $edge />
        <ToolCell $w={217} $align="flex-start" $pad={12} $color="#e81010">2014年10月30日星期四&nbsp;&nbsp;15:32:06</ToolCell>
        <ToolCell $w={31} $color="#20d020">暴力</ToolCell>
        <ToolCell $w={41} $bold>自选股</ToolCell>
        <ToolCell $w={53}>张幅排名</ToolCell>
        <ToolCell $w={51}>板块指数</ToolCell>
        <ToolCell $w={53} $color="#20d020" $edge>L1L2切换</ToolCell>
        <ToolCell $w={91} $color="#1030e0" $edge>普卖131810</ToolCell>
        <ToolCell $w={54} $color="#e81010" $edge>闪买</ToolCell>
        <ToolCell $w={54} $color="#1030e0" $edge>闪卖</ToolCell>
        <ToolCell $w={54} $edge>综合</ToolCell>
        <ToolCell $w={54} $edge>撤单</ToolCell>
        <ToolCell $w={54} $color="#1030e0" $edge>普卖</ToolCell>
        <ToolCell $w={54} $color="#e81010">闪融买</ToolCell>
      </ToolBar>

      <Main>
        <LeftColumn>
          <ChartArea>
            <SideTabs>
              {SIDE_TABS.map((chars, i) => (
                <SideTab key={i} $active={i === 0}>
                  {chars.map((c) => <SideChar key={c} $latin={c.length > 1}>{c}</SideChar>)}
                </SideTab>
              ))}
            </SideTabs>
            <ChartColumn>
              <ChartHead>
                <HeadText $color="#ff40ff">桂东电力</HeadText>
                <HeadText $gap={13} $color="#e8e8e8">分时</HeadText>
                <HeadText $gap={4} $color="#e8e8e8">主图:盘中分时突破</HeadText>
                <HeadText $gap={3} $color="#ff3030">成</HeadText>
                <HeadText $color="#20c040">交</HeadText>
                <HeadText $color="#e8e8e8">量</HeadText>
                <HeadText $gap={4}>指标</HeadText>
                <HeadText $gap={5}>涨停</HeadText>
                <HeadText $gap={4} $color={RED}>16.91</HeadText>
                <HeadText $gap={4}>跌停</HeadText>
                <HeadText $gap={5} $color={GREEN}>13.83</HeadText>
                <HeadText $gap={5} $color={YELLOW}>水力发电</HeadText>
                <HeadText $gap={6} $color="#10b8b8">[上证指数 2391.08 0.76%]</HeadText>
                <HeadText $gap={74}>统计</HeadText>
                <WindowIcon />
              </ChartHead>
              <PriceChart />
              <IndicatorHead>
                <HeadText>分时很准</HeadText>
                <HeadText $gap={3} $color="#e8e8e8">强弱: 15.41</HeadText>
                <HeadText $gap={7} $color="#00d000">阻力: 16.15</HeadText>
                <HeadText $gap={5} $color="#00d000">支撑: 15.23</HeadText>
                <HeadText $gap={6} $color="#e8e8e8">现价: 15.95</HeadText>
                <HeadText $gap={6} $color="#e8e8e8">K: 44.89</HeadText>
                <HeadText $gap={6} $color="#1030f0">D: 44.81</HeadText>
                <HeadText $gap={6} $color="#e8e8e8">K1: 35.56</HeadText>
                <HeadText $gap={5} $color="#ffff00">D1: 33.53</HeadText>
                <Fill />
                <HeadText>右键设置指标</HeadText>
                <HeadText $gap={8} $color="#777">×</HeadText>
              </IndicatorHead>
              <IndicatorChart />
              <TimeAxis>
                <TimeLabel $gap={145}>09:30</TimeLabel>
                <TimeLabel $gap={148}>10:30</TimeLabel>
                <TimeLabel $gap={145}>13:00</TimeLabel>
                <TimeLabel $gap={0}>14:00</TimeLabel>
                <LayoutLabel>布局</LayoutLabel>
              </TimeAxis>
            </ChartColumn>
          </ChartArea>

          <TabStrip>
            <TabGutter />
            {SERIES_TABS.map(([t, w, c], i) => <Tab key={i} $w={w} $color={c}>{t}</Tab>)}
            <Fill />
            <Tab $w={21} $lead>+</Tab>
            <Tab $w={15}>-</Tab>
            <Tab $w={15} $plain>0</Tab>
          </TabStrip>

          <PanelHeads>
            <PanelHead $w={413} $edge>
              <HeadText $color="#ffff00">资金流向分布</HeadText>
              <HeadText $gap={15}>桂东电力</HeadText>
              <HeadText $gap={21}>统计金额 (万元)</HeadText>
              <Fill />
              <HeadText>当日</HeadText>
            </PanelHead>
            <PanelHead $w={411} $right={5}>
              <HeadText $color="#ffff00">资金多空对比</HeadText>
              <Fill />
              <HeadText>三日</HeadText>
              <Caret />
            </PanelHead>
          </PanelHeads>

          <FundRow>
            <FlowChart data={FLOW_A} w={413} left={9} barLeft={91} edge />
            <FlowChart data={FLOW_B} w={411} left={8} barLeft={91} />
          </FundRow>

          <TabStrip $h={17}>
            {BOTTOM_TABS.map(([t, w, c]) => <Tab key={t} $w={w} $color={c}>{t}</Tab>)}
            <Fill />
            <Tab $w={52} $plain $lead>侧边栏 &lt;</Tab>
          </TabStrip>
        </LeftColumn>

        <RightPanel>
          <NameRow>
            <StockName>桂东电力</StockName>
            <StockCode>600310</StockCode>
          </NameRow>
          <PriceRow>
            <BigPrice>15.95</BigPrice>
            <Unit>元</Unit>
            ▲0.58
            <Fill />
            3.77%
          </PriceRow>
          <Row $cols="62px 32px 32px 1fr" $h={23} $rule>
            <Label>现量</Label>
            <Value $color={GREEN}>32</Value>
            <Label $pad={4}>总量</Label>
            <Value>102412</Value>
          </Row>
          <Spacer $h={2} />
          {ASK.map(([l, p, q]) => <OrderRow key={l} level={l} price={p} qty={q} />)}
          <OrderRow label="卖盘" level="一" price="15.96" qty="982" big h={20} />
          <Pressure><PressureRed /></Pressure>
          <OrderRow label="买盘" level="一" price="15.95" qty="58" big h={19} />
          {BID.map(([l, p, q]) => <OrderRow key={l} level={l} price={p} qty={q} />)}
          <Rule />
          {STATS_A.map((r) => <StatRow key={r[0]} row={r} h={19} />)}
          <Spacer $h={1} />
          <Rule />
          <Spacer $h={1} />
          {STATS_B.map((r) => <StatRow key={r[0]} row={r} h={18.67} />)}
          <Rule />
          {FLOWS.map(([l, w, v, pct, cols]) => (
            <Row key={l} $cols={cols} $h={18.75}>
              <Label>{l}</Label>
              <Tick $w={w} />
              <Value $color={RED}>{v}<BigCn>万</BigCn></Value>
              <Value $color={RED}>{pct}</Value>
            </Row>
          ))}
          <Rule />
          {TICKS.map((t, i) => <TickRow key={i} t={t} />)}
          <DottedRule />
          <TickRow t={["15:00","15.95","32","S"]} />
          <Fill />
          <TabStrip $h={17}>
            {QUOTE_TABS.map(([t, w, c]) => <Tab key={t} $w={w} $color={c} $size={13}>{t}</Tab>)}
          </TabStrip>
          <Spacer $h={1} />
        </RightPanel>
        <Banner>股海网提供<BannerUrl>Www.Guhai.Com.CN</BannerUrl></Banner>
      </Main>

      <StatusBar>
        <OrangeSquare />
        <StatusCell $w={36} $cn>上证</StatusCell>
        <StatusCell $w={68} $color="#f00000">2391.08</StatusCell>
        <StatusCell $w={49} $color="#f00000">18.05</StatusCell>
        <StatusCell $w={61}>2266<BigCn>亿</BigCn></StatusCell>
        <StatusCell $w={36} $cn>深证</StatusCell>
        <StatusCell $w={67} $color="#008000">8090.55</StatusCell>
        <StatusCell $w={50} $color="#008000">-0.13</StatusCell>
        <StatusCell $w={63}>2106<BigCn>亿</BigCn></StatusCell>
        <StatusCell $w={34} $cn>中小</StatusCell>
        <StatusCell $w={68} $color="#008000">5568.54</StatusCell>
        <StatusCell $w={50} $color="#008000">-7.17</StatusCell>
        <StatusCell $w={62}>893.6<BigCn>亿</BigCn></StatusCell>
        <StatusRule />
        <StatusCell $w={55} $cn>总成交</StatusCell>
        <StatusCell $w={50}>4373<BigCn>亿</BigCn></StatusCell>
        <StatusRule />
        <StatusCell $w={124} $cn $small>决策家_济南网通</StatusCell>
        <StatusIcon $gap={4} width="16" height="14" viewBox="0 0 16 14">
          <path d="M2 7 A6 6 0 0 1 13 4 M14 7 A6 6 0 0 1 3 10" fill="none" stroke="#e01010" strokeWidth="2" />
          <path d="M11 1 L15 5 L10 6 Z M5 13 L1 9 L6 8 Z" fill="#e01010" />
        </StatusIcon>
        <StatusIcon $gap={19} width="16" height="13" viewBox="0 0 16 13">
          <rect x="0.5" y="0.5" width="15" height="12" fill="#f4f6fa" stroke="#8aa0c0" />
          <path d="M1 1 L8 7 L15 1 M1 12 L6 6 M15 12 L10 6" fill="none" stroke="#8aa0c0" />
        </StatusIcon>
        <StatusIcon $gap={4} width="14" height="14" viewBox="0 0 14 14">
          <rect x="0.5" y="0.5" width="13" height="13" rx="4" fill="#e8d830" stroke="#908010" />
          <path d="M7 3 L10 7 L8 7 L8 11 L6 11 L6 7 L4 7 Z" fill="#605000" />
        </StatusIcon>
        <StatusIcon $gap={4} width="13" height="16" viewBox="0 0 13 16">
          <path d="M6.5 5 L6.5 12 M3 15 L10 15 L8 11 L5 11 Z" stroke="#606060" fill="#909090" />
          <path d="M1 1 A6 6 0 0 0 2 7 M12 1 A6 6 0 0 1 11 7 M3 2 A4 4 0 0 0 4 6 M10 2 A4 4 0 0 1 9 6" fill="none" stroke="#807040" />
        </StatusIcon>
        <StatusIcon $gap={6} width="10" height="13" viewBox="0 0 10 13">
          <path d="M5 0 L9 4 L1 4 Z M5 4 L9 8 L1 8 Z M5 8 L9 12 L1 12 Z" fill="#707070" />
        </StatusIcon>
        <StatusIcon $gap={8} width="4" height="12" viewBox="0 0 4 12">
          <path d="M0 0 L4 0 L3 7 L1 7 Z M1 9 L3 9 L3 12 L1 12 Z" fill="#707070" />
        </StatusIcon>
      </StatusBar>

      <AdBox>
        <AdTop>
          <AdName>股海网</AdName>
          <AdSlogan>股票软件资源分享</AdSlogan>
        </AdTop>
        <AdUrl>Www.Guhai.com.cn</AdUrl>
      </AdBox>
    </Page>
  );
}
